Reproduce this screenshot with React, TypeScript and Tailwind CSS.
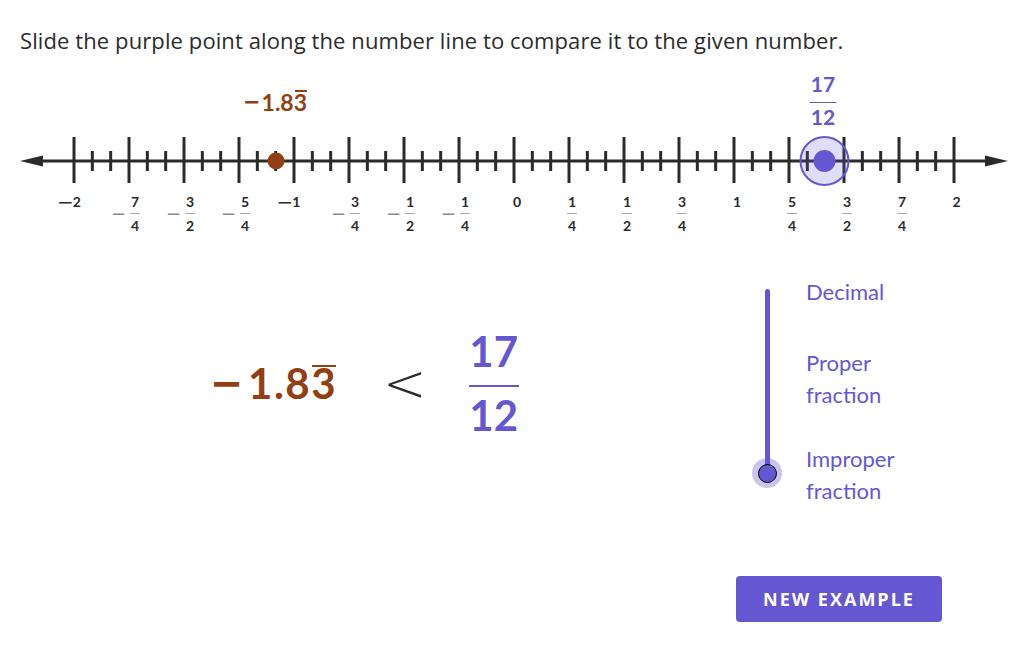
import React from "react";

const PURPLE = "#6557d2";
const BROWN = "#923f14";
const INK = "#2b2b2b";
const X0 = 514;
const STEP = 55 / 3;

const wholes = [
  { x: 70, t: "2", neg: true },
  { x: 289.5, t: "1", neg: true },
  { x: 517, t: "0", neg: false },
  { x: 737, t: "1", neg: false },
  { x: 956.5, t: "2", neg: false },
];

const fracs = [
  { x: 135, n: "7", d: "4", neg: true },
  { x: 190, n: "3", d: "2", neg: true },
  { x: 245, n: "5", d: "4", neg: true },
  { x: 355, n: "3", d: "4", neg: true },
  { x: 410, n: "1", d: "2", neg: true },
  { x: 465, n: "1", d: "4", neg: true },
  { x: 572, n: "1", d: "4", neg: false },
  { x: 627, n: "1", d: "2", neg: false },
  { x: 682, n: "3", d: "4", neg: false },
  { x: 792, n: "5", d: "4", neg: false },
  { x: 847, n: "3", d: "2", neg: false },
  { x: 902, n: "7", d: "4", neg: false },
];

function NumberLine() {
  const ticks = [];
  for (let k = -24; k <= 24; k++) {
    const x = X0 + k * STEP;
    const major = k % 3 === 0;
    ticks.push(
      <line
        key={k}
        x1={x}
        x2={x}
        y1={major ? 137 : 151}
        y2={major ? 183 : 171}
        stroke={INK}
        strokeWidth={3}
      />
    );
  }
  return (
    <div className="relative h-[180px] w-[1032px]">
      <svg width="1032" height="180" viewBox="0 60 1032 180" className="block">
        <line x1={38} x2={990} y1={161} y2={161} stroke={INK} strokeWidth={3} />
        <polygon points="20,161 43,155.5 43,166.5" fill={INK} />
        <polygon points="1008,161 985,155.5 985,166.5" fill={INK} />
        {ticks}
        <circle cx={276} cy={161} r={8.5} fill={BROWN} />
        <circle cx={824.5} cy={161} r={24} fill={PURPLE} fillOpacity={0.2} stroke={PURPLE} strokeWidth={2} />
        <circle cx={824.5} cy={161} r={11} fill={PURPLE} />
      </svg>

      {/* point labels */}
      <div
        className="absolute top-[28px] -translate-x-1/2 flex items-center text-[23px] leading-[28px] font-bold text-[#923f14] whitespace-nowrap"
        style={{ left: 275 }}
      >
        <span className="font-['DejaVu_Sans',sans-serif] font-bold text-[21px] mr-[1px]">−</span>
        <span>1.8</span>
        <span className="relative">
          3<span className="absolute left-[1px] right-0 top-[2px] h-[1.5px] bg-[#923f14]" />
        </span>
      </div>
      <div
        className="absolute top-[13px] -translate-x-1/2 flex flex-col items-center text-[21px] leading-[22px] font-bold text-[#6557d2]"
        style={{ left: 823 }}
      >
        <div>17</div>
        <div className="mt-[6.5px] h-[1.5px] w-[27px] bg-[#6557d2]" />
        <div className="mt-[2.5px]">12</div>
      </div>

      {/* tick labels */}
      {wholes.map((w) => (
        <div
          key={w.x}
          className="absolute top-[134px] -translate-x-1/2 flex items-center h-[16px] text-[14px] leading-[16px] font-bold text-[#2b2b2b] whitespace-nowrap"
          style={{ left: w.x }}
        >
          {w.neg && (
            <span className="font-['DejaVu_Sans',sans-serif] font-normal text-[20px] leading-[16px] -ml-[2px] mr-[-1px]">
              −
            </span>
          )}
          <span>{w.t}</span>
        </div>
      ))}
      {fracs.map((f) => (
        <div
          key={f.x}
          className="absolute top-[134px] -translate-x-1/2 flex flex-col items-center text-[14px] leading-[16px] font-bold text-[#2b2b2b]"
          style={{ left: f.x }}
        >
          {f.neg && (
            <span className="absolute right-full mr-[4px] top-[12px] h-[16px] font-['DejaVu_Sans',sans-serif] text-[18px] leading-[16px] font-normal text-[#8a8a8a]">
              −
            </span>
          )}
          <div className="h-[16px]">{f.n}</div>
          <div className="mt-[3px] h-px w-[10px] bg-[#aaaaaa]" />
          <div className="mt-[4px] h-[16px]">{f.d}</div>
        </div>
      ))}
    </div>
  );
}

export default function App() {
  return (
    <div className="w-[1032px] h-[645px] overflow-hidden bg-white font-['Lato',sans-serif]">
      <div className="h-[60px] pt-[27px] pl-[20px] font-['Open_Sans',sans-serif] text-[22px] leading-[26px] tracking-[0.1px] text-[#2b2b2b] whitespace-nowrap">
        Slide the purple point along the number line to compare it to the given number.
      </div>

      <NumberLine />

      <div className="flex h-[405px]">
        <div className="w-[736px] pt-[90px] pl-[210px]">
          <div className="flex items-center">
            <div className="flex items-center text-[42px] font-bold text-[#923f14] whitespace-nowrap leading-none tracking-[1.5px]">
              <span className="font-['DejaVu_Sans',sans-serif] text-[40px] mr-[3px]">−</span>
              <span>1.8</span>
              <span className="relative">
                3<span className="absolute left-[1px] right-[1px] top-[3px] h-[2px] bg-[#923f14]" />
              </span>
            </div>
            <div className="ml-[46px] font-['DejaVu_Sans',sans-serif] font-extralight text-[52px] leading-none text-[#2b2b2b]">
              &lt;
            </div>
            <div className="ml-[42px] flex flex-col items-center text-[42px] leading-[42px] font-bold text-[#6557d2]">
              <div>17</div>
              <div className="mt-[13px] h-[2px] w-[50px] bg-[#6557d2]" />
              <div className="mt-[7px]">12</div>
            </div>
          </div>
        </div>

        <div className="w-[296px] pt-[36px]">
          <div className="flex">
            <div className="relative ml-[16px] w-[30px] pt-[13px]">
              <div className="mx-auto h-[184px] w-[5px] rounded-full bg-[#6557d2]" />
              <div className="absolute left-1/2 top-[182px] h-[30px] w-[30px] -translate-x-1/2 rounded-full bg-[#6557d2]/35 flex items-center justify-center">
                <div className="h-[19px] w-[19px] rounded-full bg-[#6557d2] border border-black" />
              </div>
            </div>
            <div className="ml-[24px] text-[22px] leading-[32px] text-[#6557d2]">
              <div>Decimal</div>
              <div className="mt-[39px]">
                <div>Proper</div>
                <div>fraction</div>
              </div>
              <div className="mt-[32px]">
                <div>Improper</div>
                <div>fraction</div>
              </div>
            </div>
          </div>
          <button className="mt-[69px] flex h-[46px] w-[206px] items-center justify-center rounded-[4px] bg-[#6557d2] font-['Open_Sans',sans-serif] text-[18px] font-bold tracking-[2px] text-white">
            NEW EXAMPLE
          </button>
        </div>
      </div>
    </div>
  );
}
